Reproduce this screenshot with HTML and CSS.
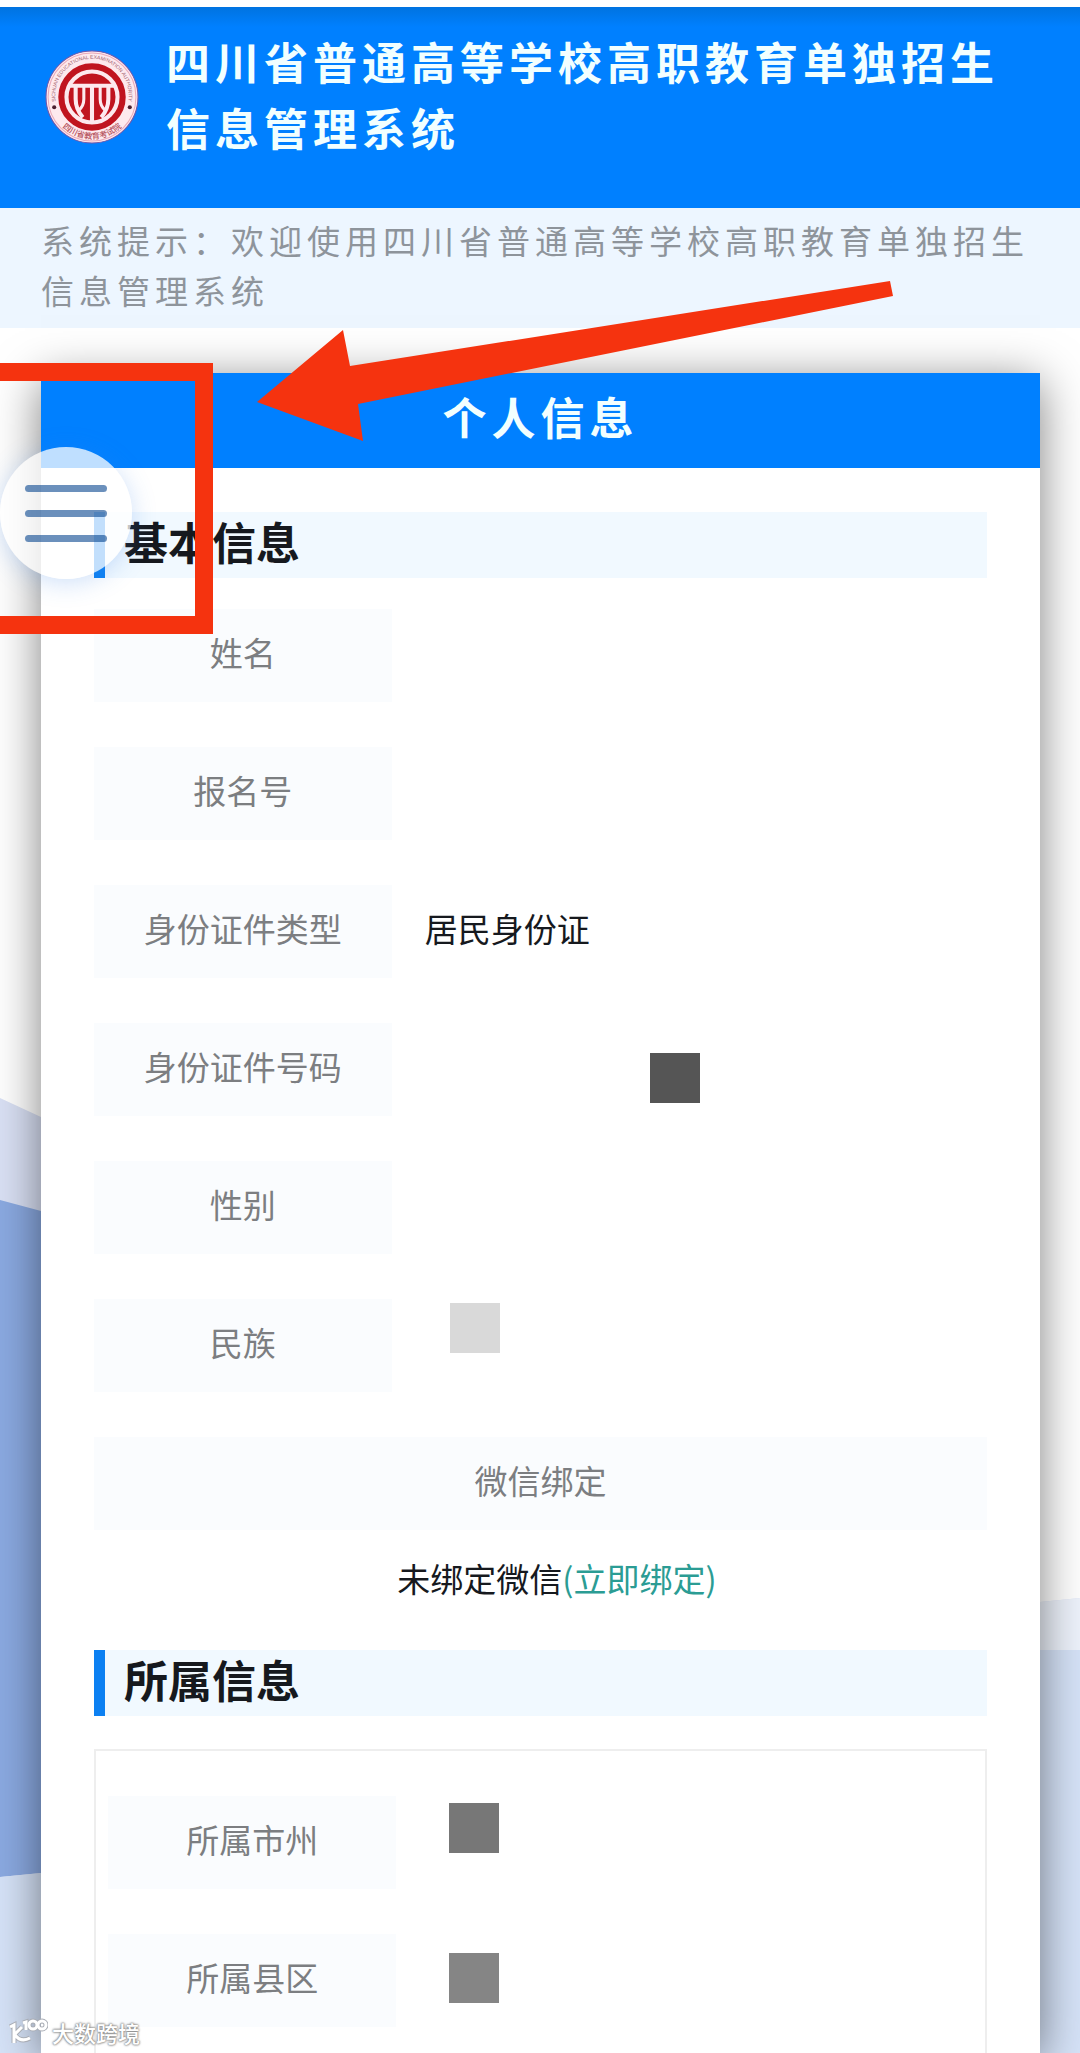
FILE: index.html
```html
<!DOCTYPE html>
<html lang="zh-CN">
<head>
<meta charset="utf-8">
<meta name="viewport" content="width=device-width, initial-scale=1">
<title>个人信息</title>
<link rel="stylesheet" href="styles.css">
</head>
<body>
<div class="page">
  <svg class="backdrop" viewBox="0 0 1080 2053" preserveAspectRatio="none" aria-hidden="true">
    <path fill="#dae1f5" d="M0 1098 L41 1117 L500 1330 L1040 1602 L1080 1598 V2053 H0Z"/>
    <path fill="#eef3fc" d="M900 1610 L1040 1602 L1080 1598 V1700 H900Z"/>
    <path fill="#8baae2" d="M0 1200 L41 1211 L500 1400 V1850 L41 1873 L0 1877Z"/>
    <path fill="#d6e3f8" d="M0 1877 L41 1873 L500 1850 L900 1650 H1080 V2053 H0Z"/>
  </svg>

  <header class="site-header">
    <svg class="logo" viewBox="-46 -46 92 92" role="img" aria-label="四川省教育考试院">
      <defs>
        <path id="arc-top" d="M-35 7 A36 36 0 1 1 35 7"/>
        <path id="arc-bottom" d="M-38 17 A42 42 0 0 0 38 17"/>
      </defs>
      <circle r="45" fill="#fde9ee" stroke="#7656a6" stroke-width="1"/>
      <circle r="43" fill="none" stroke="#e9a9b8" stroke-width="1"/>
      <circle r="30" fill="#fde9ee" stroke="#c0141f" stroke-width="6"/>
      <circle r="23" fill="#c0141f"/>
      <g fill="none" stroke="#fde9ee" stroke-width="4">
        <path d="M-23 -11H23"/>
        <path d="M-16 -11V2Q-16 12 -9 20"/>
        <path d="M-8 -11V2Q-8 9 -13 13" stroke-width="3"/>
        <path d="M0 -11V24"/>
        <path d="M8 -11V2Q8 9 13 13" stroke-width="3"/>
        <path d="M16 -11V2Q16 12 9 20"/>
      </g>
      <circle cx="-37" cy="10" r="2" fill="#4b2030"/>
      <circle cx="37" cy="10" r="2" fill="#4b2030"/>
      <text class="logo-en"><textPath href="#arc-top" startOffset="50%" text-anchor="middle">SICHUAN EDUCATIONAL EXAMINATION AUTHORITY</textPath></text>
      <text class="logo-zh"><textPath href="#arc-bottom" startOffset="50%" text-anchor="middle">四川省教育考试院</textPath></text>
    </svg>
    <h1 class="site-title">四川省普通高等学校高职教育单独招生信息管理系统</h1>
  </header>

  <p class="notice">系统提示：欢迎使用四川省普通高等学校高职教育单独招生信息管理系统</p>

  <main class="card">
    <h2 class="card-title">个人信息</h2>
    <div class="card-body">
      <h3 class="section-title">基本信息</h3>
      <dl class="fields">
        <div class="field"><dt>姓名</dt><dd></dd></div>
        <div class="field"><dt>报名号</dt><dd></dd></div>
        <div class="field"><dt>身份证件类型</dt><dd>居民身份证</dd></div>
        <div class="field"><dt>身份证件号码</dt><dd><span class="mask mask-id"></span></dd></div>
        <div class="field"><dt>性别</dt><dd></dd></div>
        <div class="field"><dt>民族</dt><dd><span class="mask mask-nation"></span></dd></div>
        <div class="field field-wide"><dt>微信绑定</dt><dd>未绑定微信<a href="#bind">(立即绑定)</a></dd></div>
      </dl>

      <h3 class="section-title">所属信息</h3>
      <dl class="fields fields-boxed">
        <div class="field"><dt>所属市州</dt><dd><span class="mask mask-city"></span></dd></div>
        <div class="field"><dt>所属县区</dt><dd><span class="mask mask-county"></span></dd></div>
      </dl>
    </div>
  </main>

  <button class="menu-button" type="button" aria-label="菜单">
    <span></span><span></span><span></span>
  </button>

  <div class="highlight"></div>
  <svg class="arrow" viewBox="0 0 640 164" aria-hidden="true">
    <path fill="#f5330f" d="M0 124 L86 52 L93 88 L633 3 L636 18 L101 126 L106 163Z"/>
  </svg>

  <div class="watermark">
    <svg viewBox="0 0 40 28" aria-hidden="true">
      <g class="mark-edge"><path d="M2 9L6 7V25M14 9L7 16M7 17Q13 25 22 20"/><path d="M15 5L18 4V12"/><circle cx="25" cy="7" r="4"/><circle cx="34" cy="7" r="4"/></g>
      <g class="mark-fill"><path d="M2 9L6 7V25M14 9L7 16M7 17Q13 25 22 20"/><path d="M15 5L18 4V12"/><circle cx="25" cy="7" r="4"/><circle cx="34" cy="7" r="4"/></g>
    </svg>
    <span>大数跨境</span>
  </div>
</div>
</body>
</html>
```
FILE: styles.css
```css
* {
  box-sizing: border-box;
}

body,
h1,
h2,
h3,
p,
dl,
dd {
  margin: 0;
}

body {
  background: #fff;
  color: #16191e;
  font-family: "Noto Sans CJK SC", sans-serif;
  font-size: 33px;
  line-height: 50px;
}

.page {
  position: relative;
  display: flex;
  flex-direction: column;
  min-height: 100vh;
  padding-top: 7px;
  overflow: hidden;
}

.backdrop {
  position: absolute;
  inset: 0;
  z-index: -1;
  width: 100%;
  height: 100%;
}

.site-header {
  display: flex;
  align-items: flex-start;
  gap: 27px;
  padding: 21px 45px 48px;
  background: linear-gradient(#0073e0, #0080ff 20px);
}

.logo {
  flex: none;
  width: 94px;
  height: 94px;
  margin-top: 22px;
}

.logo-en {
  font-family: "Liberation Sans", sans-serif;
  font-size: 5px;
  fill: #a0606c;
}

.logo-zh {
  font-size: 8px;
  font-weight: 500;
  fill: #b5525c;
}

.site-title {
  color: #f2ffff;
  font-size: 44px;
  font-weight: 700;
  letter-spacing: 5px;
  line-height: 66px;
}

.notice {
  padding: 7px 41px 13px;
  background: #edf6ff;
  color: #8e949b;
  letter-spacing: 5px;
}

.card {
  display: flex;
  flex: 1;
  flex-direction: column;
  margin: 45px 40px 0 41px;
  background: #fff;
  box-shadow: 0 8px 44px rgba(0, 0, 0, 0.5);
}

.card-title {
  padding: 10px 0 19px;
  background: #0080ff;
  color: #f2ffff;
  font-size: 44px;
  font-weight: 700;
  letter-spacing: 5px;
  line-height: 66px;
  text-align: center;
}

.card-body {
  display: flex;
  flex: 1;
  flex-direction: column;
  padding: 44px 53px 0;
}

.section-title {
  padding: 0 0 8px 19px;
  border-left: 11px solid #0c80f2;
  background: #f1f9ff;
  font-size: 44px;
  font-weight: 700;
  line-height: 58px;
}

.fields {
  display: flex;
  flex-direction: column;
  gap: 45px;
  padding: 31px 0 47px;
}

.fields-boxed {
  flex: 1;
  margin-top: 33px;
  padding: 45px 12px 24px;
  border: 2px solid #eee;
  border-bottom: 0;
}

.field {
  display: flex;
}

.field dt {
  width: calc(100% / 3);
  padding: 18px 0 25px;
  background: #fafcfe;
  color: #7c7e81;
  text-align: center;
}

.field dd {
  position: relative;
  flex: 1;
  padding: 18px 0 25px 33px;
}

.field-wide {
  flex-direction: column;
  gap: 23px;
}

.field-wide dt {
  width: 100%;
}

.field-wide dd {
  padding: 0 0 0 33px;
  text-align: center;
}

.field a {
  color: #2b9c94;
  text-decoration: none;
}

/* Squares that cover private values */
.mask {
  position: absolute;
  width: 50px;
  height: 50px;
}

.mask-id {
  top: 30px;
  left: 258px;
  background: #555;
}

.mask-nation {
  top: 4px;
  left: 58px;
  background: #d9d9d9;
}

.mask-city {
  top: 7px;
  left: 53px;
  background: #777;
}

.mask-county {
  top: 19px;
  left: 53px;
  background: #858585;
}

.menu-button {
  position: absolute;
  top: 447px;
  left: 0;
  display: flex;
  flex-direction: column;
  align-items: center;
  justify-content: center;
  gap: 18px;
  width: 132px;
  height: 132px;
  padding: 0;
  border: 0;
  border-radius: 50%;
  background: rgba(255, 255, 255, 0.75);
  box-shadow: 0 4px 24px rgba(60, 130, 230, 0.25);
}

.menu-button span {
  width: 82px;
  height: 7px;
  border-radius: 4px;
  background: rgba(0, 64, 140, 0.58);
}

.highlight {
  position: absolute;
  top: 363px;
  left: 0;
  width: 213px;
  height: 271px;
  border: 18px solid #f5330f;
  border-left: 0;
}

.arrow {
  position: absolute;
  top: 278px;
  left: 257px;
  width: 640px;
  height: 164px;
}

.watermark {
  position: absolute;
  bottom: 7px;
  left: 8px;
  display: flex;
  align-items: center;
  gap: 4px;
  color: #fff;
  font-size: 22px;
  font-weight: 500;
  line-height: 28px;
  text-shadow: 0 0 2px #888, 0 0 2px #888, 0 0 3px #999;
}

.watermark svg {
  width: 40px;
  height: 28px;
  fill: none;
}

.mark-edge {
  stroke: #a9adb5;
  stroke-width: 5;
}

.mark-fill {
  stroke: #fff;
  stroke-width: 3;
}
```
